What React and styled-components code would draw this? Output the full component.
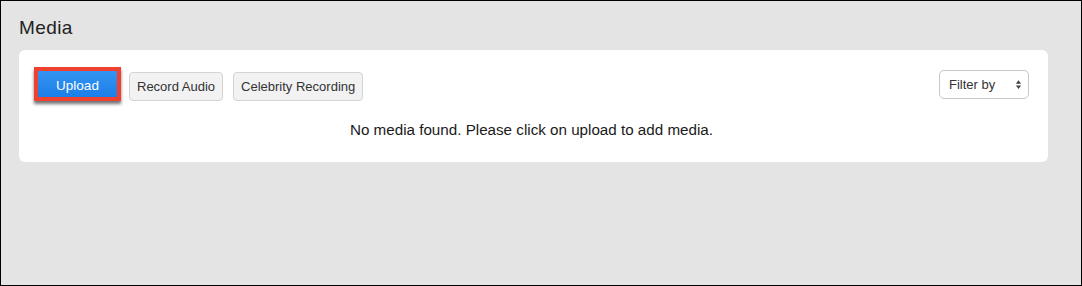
import React from 'react'
import styled, { createGlobalStyle } from 'styled-components'

const GlobalStyle = createGlobalStyle`
    html, body {
        margin: 0;
        padding: 0;
        background: #e4e4e4;
    }
    * {
        box-sizing: border-box;
    }
`

function App() {
    return (
        <>
            <GlobalStyle />
            <Page>
                <Title>Media</Title>
                <Card>
                    <Toolbar>
                        <Highlight>
                            <PrimaryButton>Upload</PrimaryButton>
                        </Highlight>
                        <Button>Record Audio</Button>
                        <Button>Celebrity Recording</Button>
                        <Spacer />
                        <Select>
                            <span>Filter by</span>
                            <Arrows viewBox="0 0 8 12">
                                <path d="M4 1 L7 5 L1 5 Z" fill="#444" />
                                <path d="M4 11 L7 7 L1 7 Z" fill="#444" />
                            </Arrows>
                        </Select>
                    </Toolbar>
                    <Empty>No media found. Please click on upload to add media.</Empty>
                </Card>
            </Page>
        </>
    )
}

export default App

const Page = styled.div`
    width: 1082px;
    height: 286px;
    border: 1px solid #000;
    background: #e4e4e4;
    padding: 14px 33px 0 18px;
    font-family: "Liberation Sans", Arial, sans-serif;
`
const Title = styled.div`
    font-size: 19px;
    letter-spacing: 0.4px;
    line-height: 26px;
    color: #222;
    margin-bottom: 9px;
`
const Card = styled.div`
    background: #fff;
    border-radius: 6px;
    padding: 17px 19px 23px 15px;
`
const Toolbar = styled.div`
    display: flex;
    align-items: flex-start;
`
const Highlight = styled.div`
    border: 4px solid #f0402f;
    box-shadow: 0 3px 3px rgba(0, 0, 0, 0.55);
    margin-right: 8px;
`
const PrimaryButton = styled.button`
    display: block;
    width: 79px;
    height: 26px;
    border: none;
    background: linear-gradient(#3594f2, #1c7fe8);
    color: #fff;
    font-family: inherit;
    font-size: 13.5px;
    padding: 3px 0 0;
`
const Button = styled.button`
    height: 29px;
    margin-top: 5px;
    margin-right: 10px;
    padding: 0 7px;
    background: #f2f2f2;
    border: 1px solid #d4d4d4;
    border-radius: 4px;
    color: #333;
    font-family: inherit;
    font-size: 13px;
`
const Spacer = styled.div`
    flex: 1;
`
const Select = styled.div`
    width: 90px;
    height: 29px;
    margin-top: 3px;
    display: flex;
    align-items: center;
    justify-content: space-between;
    padding: 0 6px 0 9px;
    border: 1px solid #c8c8c8;
    border-radius: 5px;
    font-size: 13px;
    color: #333;
`
const Arrows = styled.svg`
    width: 7px;
    height: 11px;
`
const Empty = styled.div`
    text-align: center;
    font-size: 15.2px;
    color: #1a1a1a;
    margin-top: 20px;
    line-height: 18px;
`
